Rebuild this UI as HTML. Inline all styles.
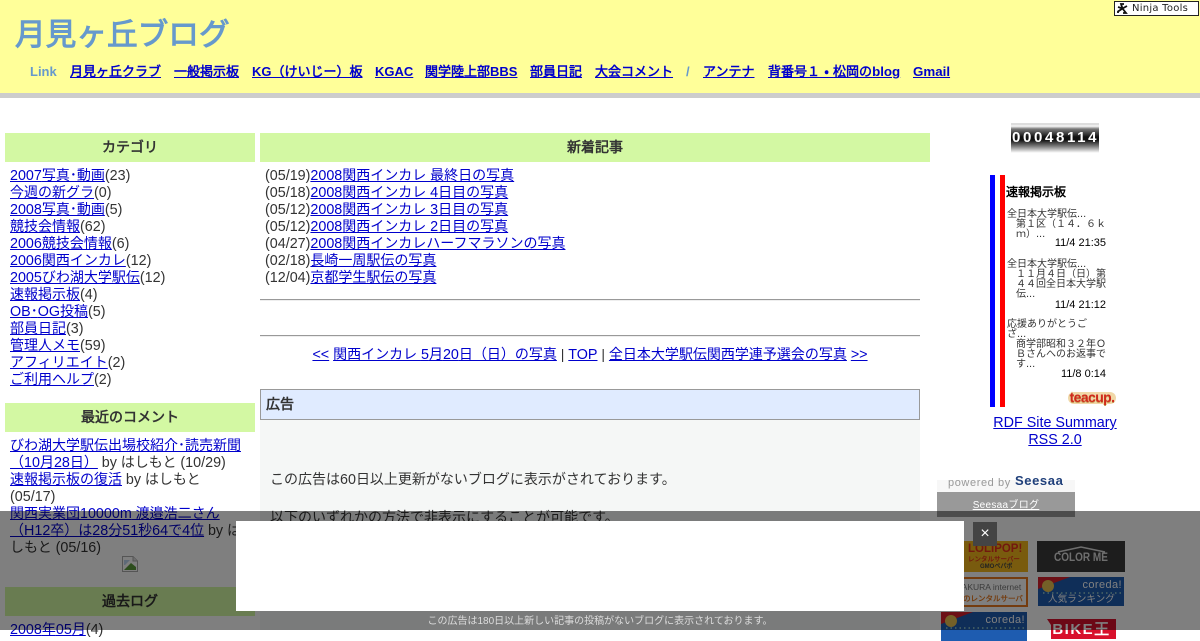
<!DOCTYPE html>
<html lang="ja"><head><meta charset="utf-8"><title>月見ヶ丘ブログ</title>
<style>
html,body{margin:0;padding:0;background:#fff;}
body{width:1200px;height:630px;overflow:hidden;position:relative;font-family:"Liberation Sans","WenQuanYi Zen Hei",sans-serif;font-size:14px;line-height:17px;color:#333;}
a{color:#00c;}
i{font-style:normal;font-size:14.33px;line-height:0;}
.a{position:absolute;white-space:nowrap;}
.hd{position:absolute;background:#d3f8a3;text-align:center;font-weight:bold;height:29px;line-height:29px;color:#333;font-size:14px;}
#nav a{position:absolute;top:0;color:#00c;white-space:nowrap;}
#nav i{font-size:13.33px;}
.t{text-align:right;color:#000;font-size:11px;position:relative;top:-1px;}
#s b{font-weight:normal;font-size:11px;line-height:0;}
</style></head><body>
<div class="a" style="left:0;top:0;width:1200px;height:93px;background:#ff9"></div>
<div class="a" style="left:0;top:93px;width:1200px;height:5px;background:#ccc"></div>
<div class="a" style="left:15px;top:16px;font-size:30.67px;line-height:38px;font-weight:bold;color:#69c">月見ヶ丘ブログ</div>
<div id="nav" class="a" style="left:0;top:63px;width:1000px;height:17px;font-size:13px;font-weight:bold;line-height:17px">
<span class="a" style="left:30px;color:#69c">Link</span>
<a href="#" style="left:70px">月見ヶ丘クラブ</a><a href="#" style="left:174px">一般掲示板</a><a href="#" style="left:252px">KG（けいじー）板</a><a href="#" style="left:375px">KGAC</a><a href="#" style="left:425px">関学陸上部BBS</a><a href="#" style="left:530px">部員日記</a><a href="#" style="left:595px">大会コメント</a><span class="a" style="left:686px;color:#69c">/</span><a href="#" style="left:703px">アンテナ</a><a href="#" style="left:768px">背番号<span style="letter-spacing:4.3px">１・</span>松岡の<i>blog</i></a><a href="#" style="left:913px"><i>Gmail</i></a></div>
<div class="a" style="left:1114px;top:1px;width:83px;height:13px;border:1px solid #222;background:#fff;font:10px/14px 'DejaVu Sans',sans-serif;letter-spacing:.25px;color:#222;text-indent:17px">Ninja Tools
<svg style="position:absolute;left:2px;top:1px" width="11" height="11" viewBox="0 0 11 11"><path d="M1 4L5.5 5.5L4 1L7 1M5.5 5.5L10 3M5.5 5.5L9 10L6 10M5.5 5.5L1 8.5L1 10" stroke="#111" stroke-width="1.8" fill="none"/></svg></div>

<!-- left column -->
<div class="hd" style="left:5px;top:133px;width:250px">カテゴリ</div>
<div class="a" style="left:10px;top:167px">
<a href="#"><i>2007</i>写真･動画</a><i>(23)</i><br><a href="#">今週の新グラ</a><i>(0)</i><br><a href="#"><i>2008</i>写真･動画</a><i>(5)</i><br><a href="#">競技会情報</a><i>(62)</i><br><a href="#"><i>2006</i>競技会情報</a><i>(6)</i><br><a href="#"><i>2006</i>関西インカレ</a><i>(12)</i><br><a href="#"><i>2005</i>びわ湖大学駅伝</a><i>(12)</i><br><a href="#">速報掲示板</a><i>(4)</i><br><a href="#"><i>OB</i>･<i>OG</i>投稿</a><i>(5)</i><br><a href="#">部員日記</a><i>(3)</i><br><a href="#">管理人メモ</a><i>(59)</i><br><a href="#">アフィリエイト</a><i>(2)</i><br><a href="#">ご利用ヘルプ</a><i>(2)</i></div>
<div class="hd" style="left:5px;top:403px;width:250px">最近のコメント</div>
<div class="a" style="left:10px;top:437px;width:245px;height:125px;overflow:hidden"><a href="#">びわ湖大学駅伝出場校紹介･読売新聞<br>（<i>10</i>月<i>28</i>日）</a> <i>by</i> はしもと <i>(10/29)</i><br><a href="#">速報掲示板の復活</a> <i>by</i> はしもと<br><i>(05/17)</i><br><a href="#">関西実業団<i>10000m</i> 渡邉浩二さん<br>（<i>H12</i>卒）は<i>28</i>分<i>51</i>秒<i>64</i>で<i>4</i>位</a> <i>by</i> は<br>しもと <i>(05/16)</i></div>
<svg class="a" style="left:122px;top:556px" width="16" height="16" viewBox="0 0 16 16"><path d="M.5.5H11L15.5 5V15.5H.5Z" fill="#fff" stroke="#aaa"/><path d="M11 .5V5H15.5" fill="#ddd" stroke="#aaa"/><path d="M2 14L9 7L14 11V14Z" fill="#5a9a3a"/><path d="M2 4H8L3 9H2Z" fill="#bcd4f0"/></svg>
<div class="hd" style="left:5px;top:587px;width:250px">過去ログ</div>
<div class="a" style="left:10px;top:621px"><a href="#"><i>2008</i>年<i>05</i>月</a><i>(4)</i></div>

<!-- center column -->
<div class="hd" style="left:260px;top:133px;width:670px">新着記事</div>
<div class="a" style="left:265px;top:167px"><i>(05/19)</i><a href="#"><i>2008</i>関西インカレ 最終日の写真</a><br><i>(05/18)</i><a href="#"><i>2008</i>関西インカレ <i>4</i>日目の写真</a><br><i>(05/12)</i><a href="#"><i>2008</i>関西インカレ <i>3</i>日目の写真</a><br><i>(05/12)</i><a href="#"><i>2008</i>関西インカレ <i>2</i>日目の写真</a><br><i>(04/27)</i><a href="#"><i>2008</i>関西インカレハーフマラソンの写真</a><br><i>(02/18)</i><a href="#">長崎一周駅伝の写真</a><br><i>(12/04)</i><a href="#">京都学生駅伝の写真</a></div>
<div class="a" style="left:260px;top:299px;width:660px;height:1px;background:#999;border-bottom:1px solid #eee"></div>
<div class="a" style="left:260px;top:335px;width:660px;height:1px;background:#999;border-bottom:1px solid #eee"></div>
<div class="a" style="left:260px;top:346px;width:660px;text-align:center"><a href="#"><i>&lt;&lt;</i></a> <a href="#">関西インカレ <i>5</i>月<i>20</i>日（日）の写真</a> | <a href="#"><i>TOP</i></a> | <a href="#">全日本大学駅伝関西学連予選会の写真</a> <a href="#"><i>&gt;&gt;</i></a></div>
<div class="a" style="left:260px;top:420px;width:660px;height:210px;background:#f5f7f6"></div>
<div class="a" style="left:260px;top:389px;width:653px;height:29px;padding-left:5px;border:1px solid #999;background:#e0ebff;font-weight:bold;line-height:29px;color:#333">広告</div>
<div class="a" style="left:270px;top:471px">この広告は<i>60</i>日以上更新がないブログに表示がされております。</div>
<div class="a" style="left:270px;top:509px">以下のいずれかの方法で非表示にすることが可能です。</div>

<!-- right column -->
<div class="a" style="left:1011px;top:123px;width:88px;height:30px;background:linear-gradient(#ddd 0,#ddd 2px,#fff 3px,#777 6px,#111 14px,#111 17px,#777 23px,#eee 29px,#fff 30px);color:#fff;font:bold 15px/30px 'Liberation Sans',sans-serif;letter-spacing:2.65px;text-indent:1px">00048114</div>
<div class="a" style="left:990px;top:175px;width:5px;height:232px;background:#00f"></div>
<div class="a" style="left:1000px;top:175px;width:5px;height:232px;background:#f00"></div>
<div class="a" style="left:1006px;top:184px;font-size:12px;font-weight:bold;line-height:16px;color:#000">速報掲示板</div>
<div id="s" class="a" style="left:1007px;top:210px;width:99px;font-size:10px;line-height:10px;color:#333">
全日本大学駅伝<b>...</b><div style="margin-left:9px">第１区（１４．６ｋ<br>ｍ）<b>...</b></div><div class="t" style="top:-2px">11/4 21:35</div>
<div style="height:10px"></div>
全日本大学駅伝<b>...</b><div style="margin-left:9px">１１月４日（日）第<br>４４回全日本大学駅<br>伝<b>...</b></div><div class="t" style="top:0">11/4 21:12</div>
<div style="height:10px"></div>
応援ありがとうご<br>ざ<b>...</b><div style="margin-left:9px">商学部昭和３２年Ｏ<br>Ｂさんへのお返事で<br>す<b>...</b></div><div class="t">11/8 0:14</div></div>
<div class="a" style="left:1068px;top:392px;width:48px;height:12px;background:#f0d8a8;border-radius:6px"></div>
<div class="a" style="left:1067px;top:389px;width:50px;height:18px;color:#d02a1c;font:bold 14px/17px 'Liberation Sans',sans-serif;letter-spacing:-.6px;text-align:center;text-shadow:0 1px 0 #c89858,1px 0 0 #f0d8a8,-1px 0 0 #f0d8a8,0 -1px 0 #f0d8a8">teacup.</div>
<div class="a" style="left:980px;top:414px;width:150px;text-align:center"><a href="#"><i>RDF Site Summary</i></a><br><a href="#"><i>RSS 2.0</i></a></div>
<div class="a" style="left:937px;top:480px;width:138px;height:12px;background:#f7f7f7"></div>
<div class="a" style="left:948px;top:476px;font-size:11px;line-height:14px;letter-spacing:.6px;color:#999">powered by</div>
<div class="a" style="left:1015px;top:473px;font-size:13px;line-height:16px;font-weight:bold;letter-spacing:.6px;color:#1f3f7a">Seesaa</div>
<div class="a" style="left:937px;top:492px;width:138px;height:25px;background:#999;color:#fff;font-size:10px;line-height:28px;text-align:center;letter-spacing:.3px"><span style="text-decoration:underline">Seesaaブログ</span></div>
<!-- banners -->
<div class="a" style="left:940px;top:541px;width:88px;height:31px;background:#f2b71c;overflow:hidden;font-family:'Liberation Sans','WenQuanYi Zen Hei',sans-serif;font-weight:bold">
<span class="a" style="left:28px;top:2px;font-size:11.5px;line-height:13px;color:#e5301c">LOLIPOP!</span>
<span class="a" style="left:28px;top:15px;font-size:6.5px;line-height:8px;color:#e5301c">レンタルサーバー</span>
<span class="a" style="left:40px;top:23px;font-size:6px;line-height:7px;color:#444">GMOペパボ</span></div>
<div class="a" style="left:1037px;top:541px;width:88px;height:31px;background:#3a3a3a;overflow:hidden"><svg class="a" style="left:0;top:0" width="88" height="31"><path d="M21 11L44 6L68 11" stroke="#ddd" stroke-width="1.5" fill="none"/></svg><span class="a" style="left:17px;top:10px;color:#ddd;font:bold 11.5px/14px 'Liberation Sans',sans-serif;transform:scaleX(.87);transform-origin:0 0">COLOR ME</span></div>
<div class="a" style="left:940px;top:577px;width:84px;height:26px;border:2px solid #e8781e;background:#fff;overflow:hidden;font-family:'Liberation Sans','WenQuanYi Zen Hei',sans-serif"><span class="a" style="left:14px;top:3px;font-size:8.5px;line-height:11px;color:#777">SAKURA internet</span><span class="a" style="left:6px;top:15px;font-size:7.5px;line-height:10px;font-weight:bold;color:#e8781e">人気のレンタルサーバ</span></div>
<div class="a" style="left:1038px;top:577px;width:86px;height:29px;background:#1e5cb0;color:#fff;overflow:hidden;font-family:'Liberation Sans','WenQuanYi Zen Hei',sans-serif"><svg class="a" style="left:0;top:0" width="86" height="29"><path d="M0 0H32L0 12Z" fill="#d8202c"/><circle cx="10" cy="9" r="6" fill="#e8c050"/><path d="M5 16H84" stroke="#9cc" stroke-width="1.5" stroke-dasharray="1.5 3"/></svg><span class="a" style="right:2px;top:1px;font-size:11px;line-height:14px;letter-spacing:.4px">coreda!</span><span class="a" style="left:10px;top:17px;font-size:9.6px;line-height:11px;color:#fff">人気ランキング</span></div>
<div class="a" style="left:941px;top:612px;width:86px;height:29px;background:#1e5cb0;color:#fff;overflow:hidden;font-family:'Liberation Sans',sans-serif"><svg class="a" style="left:0;top:0" width="86" height="29"><path d="M0 0H32L0 12Z" fill="#d8202c"/><circle cx="10" cy="9" r="6" fill="#e8c050"/><path d="M5 16H84" stroke="#9cc" stroke-width="1.5" stroke-dasharray="1.5 3"/></svg><span class="a" style="right:2px;top:1px;font-size:11px;line-height:14px;letter-spacing:.4px">coreda!</span></div>
<svg class="a" style="left:1047px;top:619px" width="69" height="20"><path d="M0 0H69V20H4V6Z" fill="#d8102c"/></svg>
<div class="a" style="left:1047px;top:621px;width:69px;color:#fff;font:bold 15px/18px 'Liberation Sans','WenQuanYi Zen Hei',sans-serif;text-align:center;letter-spacing:1.5px">BIKE王</div>

<!-- overlay -->
<div class="a" style="left:0;top:511px;width:1200px;height:119px;background:rgba(0,0,0,.5)"></div>
<div class="a" style="left:236px;top:521px;width:728px;height:90px;background:#fff"></div>
<div class="a" style="left:973px;top:522px;width:24px;height:24px;background:#444;color:#fff;font:16px/24px 'Liberation Sans','WenQuanYi Zen Hei',sans-serif;text-align:center">×</div>
<div class="a" style="left:0;top:615px;width:1200px;text-align:center;font-size:10px;line-height:14px;color:#ddd">この広告は180日以上新しい記事の投稿がないブログに表示されております。</div>
</body></html>
